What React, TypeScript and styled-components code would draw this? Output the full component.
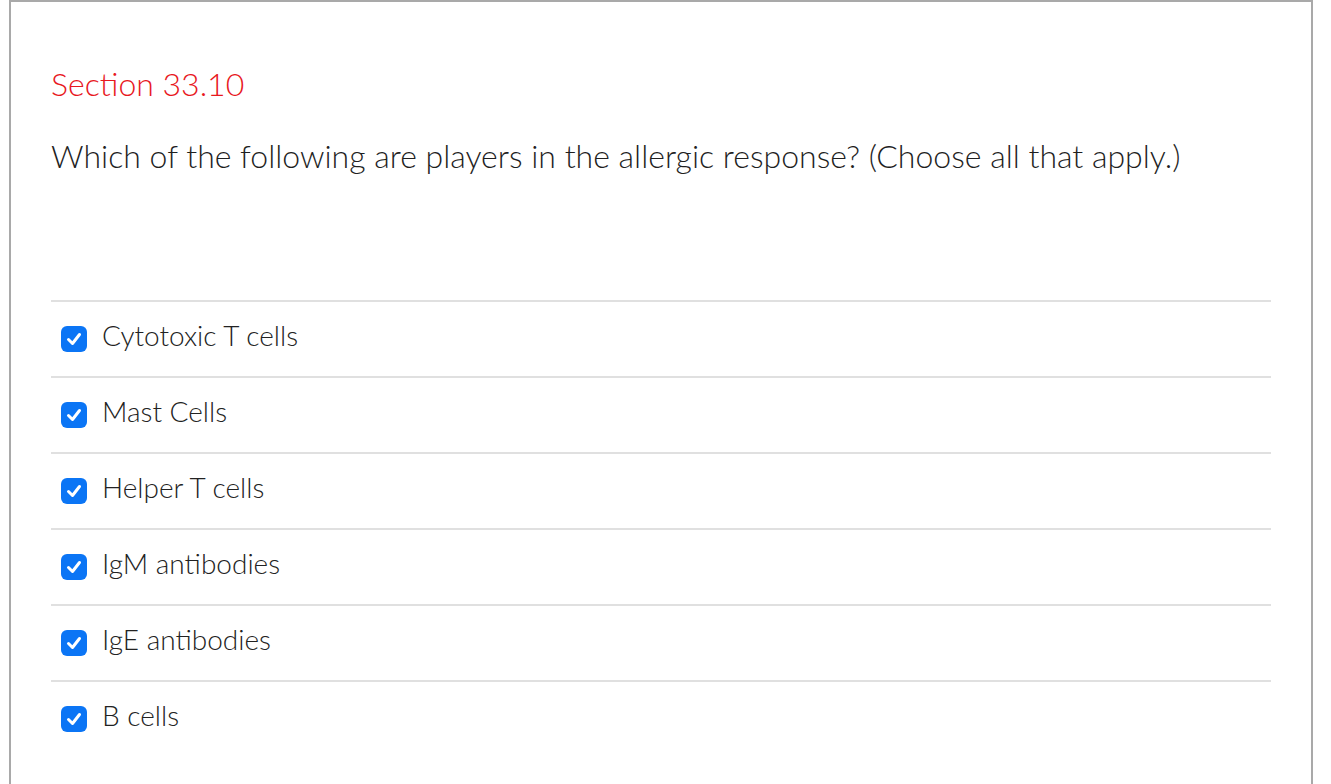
import { createGlobalStyle, styled } from 'styled-components';

const OPTIONS = [
  'Cytotoxic T cells',
  'Mast Cells',
  'Helper T cells',
  'IgM antibodies',
  'IgE antibodies',
  'B cells',
];

const GlobalStyle = createGlobalStyle`
  html, body {
    margin: 0;
    padding: 0;
    background: #fff;
  }
  body {
    font-family: Lato, "Open Sans", sans-serif;
    color: #222;
  }
`;

const CheckMark = () => (
  <svg width="20" height="20" viewBox="0 0 20 20" fill="none">
    <path
      d="M4.5 10.5 L8.5 14.5 L15.5 5.5"
      stroke="#fff"
      strokeWidth="3"
      strokeLinecap="round"
      strokeLinejoin="round"
    />
  </svg>
);

const App = () => {
  return (
    <>
      <GlobalStyle />
      <Frame>
        <SectionTitle>Section 33.10</SectionTitle>
        <Question>
          Which of the following are players in the allergic response? (Choose
          all that apply.)
        </Question>
        <AnswerList>
          {OPTIONS.map((label) => (
            <Answer key={label}>
              <CheckBox>
                <CheckMark />
              </CheckBox>
              <AnswerLabel>{label}</AnswerLabel>
            </Answer>
          ))}
        </AnswerList>
      </Frame>
    </>
  );
};

export default App;

const Frame = styled.div`
  margin-left: 9px;
  width: 1304px;
  height: 800px;
  box-sizing: border-box;
  border: 2px solid #a9a9a9;
  border-bottom: none;
  padding: 62px 40px 0 40px;
`;

const SectionTitle = styled.h2`
  margin: 0;
  font-size: 32px;
  font-weight: 300;
  line-height: 40px;
  color: #e8181e;
`;

const Question = styled.p`
  margin: 32px 0 0 0;
  font-size: 32px;
  font-weight: 300;
  line-height: 40px;
  color: #1f1f1f;
`;

const AnswerList = styled.ul`
  list-style: none;
  margin: 124px 0 0 0;
  padding: 0;
`;

const Answer = styled.li`
  display: flex;
  align-items: center;
  height: 76px;
  box-sizing: border-box;
  border-top: 2px solid #e0e0e0;
  padding: 0 0 2px 10px;
`;

const CheckBox = styled.span`
  display: flex;
  align-items: center;
  justify-content: center;
  width: 26px;
  height: 26px;
  border-radius: 6px;
  background: #0b75f5;
  margin: 2px 15px 0 0;
  flex-shrink: 0;
`;

const AnswerLabel = styled.span`
  font-size: 28px;
  font-weight: 300;
  line-height: 34px;
  padding-bottom: 6px;
  color: #222;
`;
